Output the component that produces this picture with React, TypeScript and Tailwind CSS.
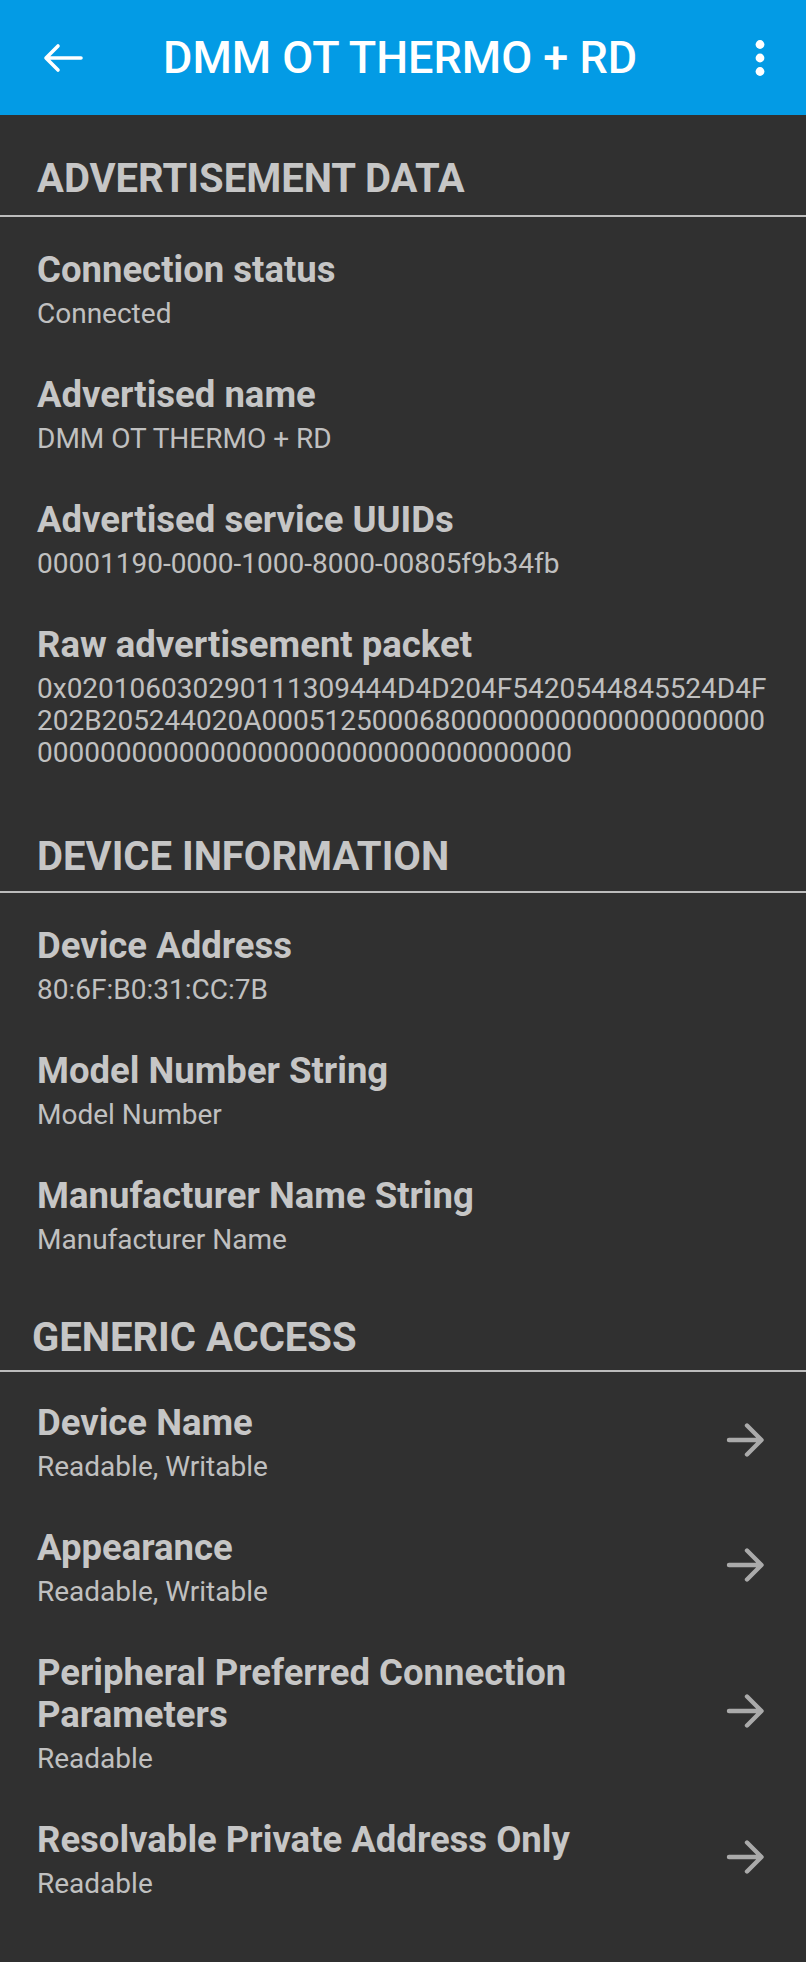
import React from "react";

const font = { fontFamily: "Roboto, 'Noto Sans', sans-serif" };

function BackArrow() {
  return (
    <svg width="40" height="30" viewBox="0 0 40 30" fill="none">
      <path
        d="M38 15H4M15 3L3 15L15 27"
        stroke="white"
        strokeWidth="3.6"
        strokeLinecap="round"
        strokeLinejoin="round"
      />
    </svg>
  );
}

function MoreDots() {
  return (
    <svg width="12" height="40" viewBox="0 0 12 40" fill="white">
      <circle cx="6" cy="6.5" r="4.4" />
      <circle cx="6" cy="20" r="4.4" />
      <circle cx="6" cy="33.5" r="4.4" />
    </svg>
  );
}

function RightArrow() {
  return (
    <svg width="40" height="38" viewBox="0 0 40 38" fill="none">
      <path
        d="M3 19H35M21 4.5L35.5 19L21 33.5"
        stroke="#aaaaaa"
        strokeWidth="4.4"
        strokeLinecap="round"
        strokeLinejoin="round"
      />
    </svg>
  );
}

function SectionHeader({ title, className }: any) {
  return (
    <div className={`border-b-2 border-[#bcbcbc] ${className}`}>
      <div className="text-[40px] font-bold leading-[48px] text-[#c6c6c6]">
        {title}
      </div>
    </div>
  );
}

function Item({ title, lines, arrow }: any) {
  return (
    <div className="flex items-center pl-[37px] pr-[40px]">
      <div className="flex-1">
        <div className="text-[36.5px] font-bold leading-[42px] text-[#c6c6c6]">
          {title}
        </div>
        <div className="mt-[7px] text-[28px] leading-[32px] text-[#c0c0c0]">
          {lines.map((l: string, i: number) => (
            <div key={i}>{l}</div>
          ))}
        </div>
      </div>
      {arrow && (
        <div className="-mt-[6px] shrink-0">
          <RightArrow />
        </div>
      )}
    </div>
  );
}

export default function App() {
  return (
    <div className="min-h-[1962px] w-[806px] bg-[#303030]" style={font}>
      <div className="flex h-[115px] items-center bg-[#039be5]">
        <div className="ml-[43px] flex items-center">
          <BackArrow />
        </div>
        <div className="ml-[80px] flex-1 text-[45px] font-medium leading-none text-white">
          DMM OT THERMO + RD
        </div>
        <div className="mr-[40px]">
          <MoreDots />
        </div>
      </div>

      <SectionHeader
        title="ADVERTISEMENT DATA"
        className="pb-[12px] pl-[37px] pt-[40px]"
      />
      <div className="flex flex-col gap-[44px] pb-[24px] pt-[32px]">
        <Item title="Connection status" lines={["Connected"]} />
        <Item title="Advertised name" lines={["DMM OT THERMO + RD"]} />
        <Item
          title="Advertised service UUIDs"
          lines={["00001190-0000-1000-8000-00805f9b34fb"]}
        />
        <Item
          title="Raw advertisement packet"
          lines={[
            "0x020106030290111309444D4D204F5420544845524D4F",
            "202B205244020A00051250006800000000000000000000",
            "0000000000000000000000000000000000",
          ]}
        />
      </div>

      <SectionHeader
        title="DEVICE INFORMATION"
        className="pb-[10px] pl-[37px] pt-[40px]"
      />
      <div className="flex flex-col gap-[44px] pb-[18px] pt-[32px]">
        <Item title="Device Address" lines={["80:6F:B0:31:CC:7B"]} />
        <Item title="Model Number String" lines={["Model Number"]} />
        <Item title="Manufacturer Name String" lines={["Manufacturer Name"]} />
      </div>

      <SectionHeader
        title="GENERIC ACCESS"
        className="pb-[8px] pl-[32px] pt-[40px]"
      />
      <div className="flex flex-col gap-[44px] pt-[30px]">
        <Item title="Device Name" lines={["Readable, Writable"]} arrow />
        <Item title="Appearance" lines={["Readable, Writable"]} arrow />
        <Item
          title={
            <>
              Peripheral Preferred Connection
              <br />
              Parameters
            </>
          }
          lines={["Readable"]}
          arrow
        />
        <Item title="Resolvable Private Address Only" lines={["Readable"]} arrow />
      </div>
    </div>
  );
}
